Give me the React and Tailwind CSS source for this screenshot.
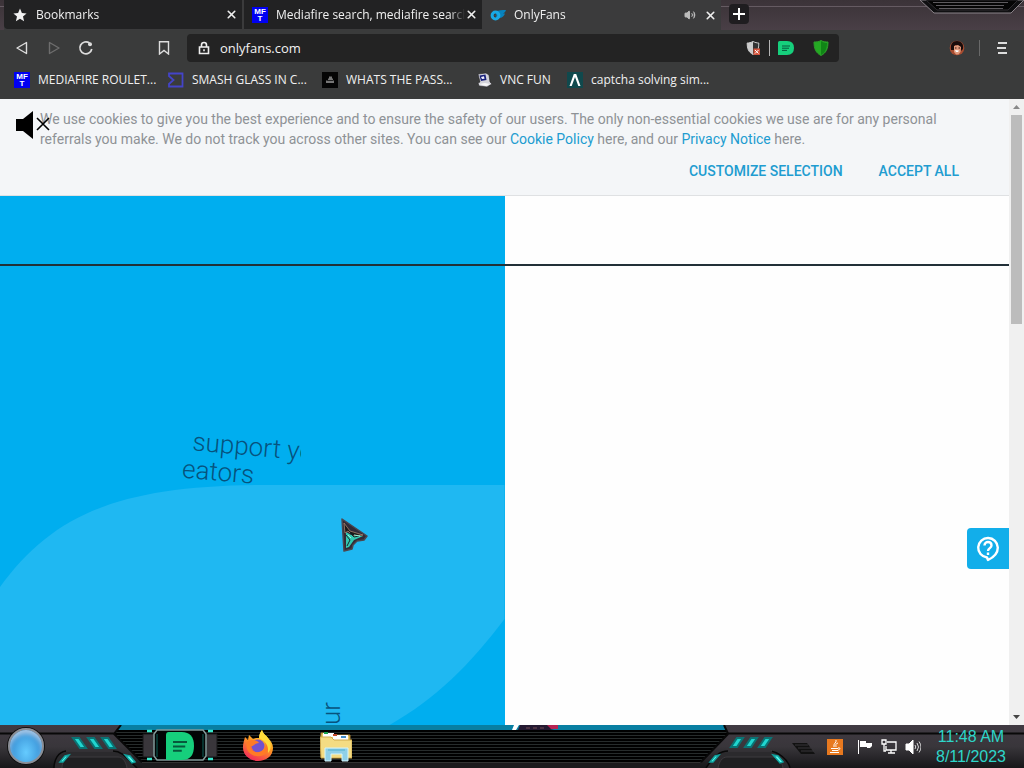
import React from "react";
import { X, Volume2 } from "lucide-react";

const stripes =
  "bg-[repeating-linear-gradient(180deg,#000_0px,#000_2px,#262b2b_2px,#262b2b_3px)]";

function MftIcon() {
  return (
    <span
      aria-hidden="true"
      className="flex h-4 w-4 shrink-0 flex-col items-center justify-center overflow-hidden bg-[#0000f2] font-['Liberation_Sans'] text-[8px] leading-[7px] font-bold text-white"
    >
      <span>MF</span>
      <span>T</span>
    </span>
  );
}

function StarIcon() {
  return (
    <svg viewBox="0 0 14 14" className="mx-px h-3.5 w-3.5 shrink-0" fill="#f2f2f2">
      <path d="M7 .6 8.9 5l4.7.4-3.6 3.1 1.1 4.7L7 10.7 2.9 13.2 4 8.500.4 5.400 5.1 5z" />
    </svg>
  );
}

function OnlyFansIcon() {
  return (
    <svg viewBox="0 0 16 16" className="h-4 w-4 shrink-0">
      <path d="M6 4.500C8.500 3 12 3 16 3c-.5 2-1.700 3-3 3.500 1 .1 1.500 0 2 0C14 9 12.500 10.500 10 11H6z" fill="#0782bd" />
      <circle cx="5.500" cy="8.500" r="3.400" fill="none" stroke="#18a9e6" strokeWidth="3" />
      <circle cx="5.500" cy="8.500" r="1.100" fill="#3b4c55" />
    </svg>
  );
}

function SigmaIcon() {
  return (
    <svg viewBox="0 0 16 16" className="h-4 w-4 shrink-0" fill="none" stroke="#4444c8" strokeWidth="1.800">
      <path d="M1 1.500h13.500v13H1V12l4.500-4L1 4z" />
    </svg>
  );
}

function CakeIcon() {
  return (
    <svg viewBox="0 0 16 16" className="h-4 w-4 shrink-0">
      <path d="M0 0h16v16H0z" fill="#050505" />
      <path d="M7 4.500h3v2h1v2h1V11H4V8.500h2v-2h1z" fill="#777" />
      <path d="M5 8.500h6" stroke="#222" />
    </svg>
  );
}

function VncIcon() {
  return (
    <svg viewBox="0 0 16 16" className="h-4 w-4 shrink-0">
      <path d="m2 2 8-1 3 2 1 7 2 2-5 3-8-1-1-3 2-1z" fill="#d3d3da" stroke="#222" strokeWidth=".6" />
      <path d="m3.500 3.500 6-1 1 5.500-5.500 1z" fill="#18207a" />
      <path d="m5 5 3-.8.5 2.500L6 7z" fill="#f4f4ff" />
      <path d="m3 12 6-1 5 1-4 2z" fill="#f7f7f7" />
    </svg>
  );
}

function CaptchaIcon() {
  return (
    <svg viewBox="0 0 16 16" className="h-4 w-4 shrink-0">
      <path d="M0 0h16v16H0z" fill="#10494d" />
      <path d="M2.500 14 6.800 2h2.400l4.300 12h-2.200L8 5 4.700 14z" fill="#fff" />
    </svg>
  );
}

function NoteIcon({ className }) {
  return (
    <svg viewBox="0 0 16 14" className={className} preserveAspectRatio="none">
      <path d="M0 1.500Q0 0 1.500 0H9q7 0 7 7t-7 7H0z" fill="#16cf7c" />
      <path d="M4 5h8M4 7.200h7M4 9.400h5" stroke="#07583c" strokeWidth="1" />
    </svg>
  );
}

function Tab({ icon, title, active, audio, className }) {
  return (
    <div
      className={`flex h-full min-w-0 items-center pl-2 pr-1 ${active ? "bg-[#3b3b3c]" : "bg-[#222223]"} ${className}`}
    >
      <button type="button" role="tab" aria-selected={!!active} className="flex min-w-0 flex-1 items-center gap-2 text-left">
        {icon}
        <span className="min-w-0 flex-1 overflow-hidden whitespace-nowrap [mask-image:linear-gradient(90deg,#000_92%,transparent)]">
          {title}
        </span>
      </button>
      {audio && (
        <button type="button" aria-label="Mute tab" className="mr-2 text-[#bbb]">
          <Volume2 size={12} fill="#bbb" />
        </button>
      )}
      <button type="button" aria-label={`Close ${title}`} className="text-[#eee]">
        <X size={13} strokeWidth={3} />
      </button>
    </div>
  );
}

function BrowserTabs() {
  return (
    <div className="relative flex h-[30px] items-start bg-linear-to-b from-[#3b3338] to-[#493f46] pl-1">
      <span className="absolute inset-x-0 top-1.5 h-px bg-[#655b62]" />
      <div role="tablist" className="relative flex h-full w-[717px] bg-[#3b3b3c]">
        <div className="flex w-[478px] gap-0.5 pb-px">
          <Tab className="flex-1 rounded-bl" icon={<StarIcon />} title="Bookmarks" />
          <Tab className="flex-1" icon={<MftIcon />} title="Mediafire search, mediafire search" />
        </div>
        <Tab className="flex-1" active audio icon={<OnlyFansIcon />} title="OnlyFans" />
      </div>
      <button
        type="button"
        aria-label="New tab"
        className="relative mt-1 ml-2 flex h-5 w-5 items-center justify-center rounded bg-[#1f1d20]"
      >
        <svg viewBox="0 0 12 12" className="h-3 w-3" stroke="#fff" strokeWidth="2">
          <path d="M6 0v12M0 6h12" />
        </svg>
      </button>
      <svg viewBox="0 0 106 15" className="absolute top-0 right-0 h-[15px] w-[106px]">
        <path d="M2 0h104l-13 13H16z" fill="#101012" stroke="#8a8389" />
        <path d="M8 0h92l-10 10H19z" fill="#050505" stroke="#2f2d30" />
        <path d="M15 2.500h75M18 5.500h68M21 8.500h64" stroke="#5d5a5e" />
      </svg>
    </div>
  );
}

function Toolbar() {
  return (
    <div className="flex h-9 items-center bg-[#3a3b3b]">
      <div className="flex w-[187px] shrink-0 items-center pl-4">
        <button type="button" aria-label="Back">
          <svg viewBox="0 0 12 14" className="h-3.5 w-3" fill="none" stroke="#ddd" strokeWidth="1.400" strokeLinejoin="round">
            <path d="M10.500 1.500v11L1 7z" />
          </svg>
        </button>
        <button type="button" aria-label="Forward" className="ml-5">
          <svg viewBox="0 0 12 14" className="h-3.5 w-3" fill="none" stroke="#6d6d6d" strokeWidth="1.400" strokeLinejoin="round">
            <path d="M1.500 1.500v11L11 7z" />
          </svg>
        </button>
        <button type="button" aria-label="Reload" className="ml-[18px]">
          <svg viewBox="0 0 16 16" className="h-4 w-4" fill="none" stroke="#ddd" strokeWidth="1.700">
            <path d="M11.500 3A6 6 0 1 0 13.800 9" />
            <circle cx="12" cy="4.300" r="2" fill="#ddd" stroke="none" />
          </svg>
        </button>
        <button type="button" aria-label="Bookmark page" className="ml-16">
          <svg viewBox="0 0 12 14" className="h-3.5 w-3" fill="none" stroke="#ddd" strokeWidth="1.400">
            <path d="M1.500.8h9V13L6 9.500 1.500 13z" />
          </svg>
        </button>
      </div>
      <div className="flex h-7 min-w-0 flex-1 items-center rounded bg-[#232323] pr-2.5">
        <svg viewBox="0 0 12 14" className="ml-[11px] h-3.5 w-3" fill="none" stroke="#eee" strokeWidth="1.600">
          <path d="M1.500 6h9v6.500h-9zM3.500 6V4a2.500 2.500 0 0 1 5 0v2M6 8.200v2" />
        </svg>
        <input
          aria-label="Address"
          defaultValue="onlyfans.com"
          className="ml-2.5 min-w-0 flex-1 bg-transparent text-[13px] leading-5 text-[#f2f2f2] outline-none"
        />
        <button type="button" aria-label="Blocked content">
          <svg viewBox="0 0 15 16" className="h-4 w-[15px]">
            <path d="M7 1.500c2 1 4 1.500 5.800 1.500 0 6-1 9-5.800 11.500C2.500 12 1.200 9 1.200 3 3 3 5 2.500 7 1.500z" fill="#333" stroke="#ccc" />
            <path d="M7 1.500v13C2.500 12 1.200 9 1.200 3 3 3 5 2.500 7 1.500z" fill="#ccc" />
            <path d="M7.500 8.500H14V15H7.500z" fill="#d4543c" />
            <path d="m9 10 3.500 3.500m0-3.500L9 13.500" stroke="#fff" />
          </svg>
        </button>
        <span className="mx-2 h-4 w-px bg-[#b5b5b5]" />
        <button type="button" aria-label="Notes">
          <NoteIcon className="h-3.5 w-4" />
        </button>
        <button type="button" aria-label="Protection" className="ml-[19px]">
          <svg viewBox="0 0 16 16" className="h-4 w-4">
            <path d="M8 .5c2 1.200 4.500 1.500 7 1.500 0 7-2 11-7 13.500C3 13 1 9 1 2 3.500 2 6 1.700 8 .5z" fill="#24a923" stroke="#2d9a2b" />
            <path d="M8 1v14c4-2.500 6-6 6-12-2 0-4-.6-6-2z" fill="#108516" />
          </svg>
        </button>
      </div>
      <div className="flex w-[185px] shrink-0 items-center justify-end pr-[17px]">
        <button type="button" aria-label="Profile">
          <svg viewBox="0 0 16 16" className="h-4 w-4">
            <circle cx="8" cy="8" r="7.300" fill="#a84c30" />
            <path d="M2 10C1 4 4 1 8 1s7 3 6 8l-2 2V7L6 5 5 10z" fill="#190c0b" />
            <path d="m5 6 4-1 3 2-.5 5-2 2.500H7L5 12z" fill="#e09a7c" />
            <path d="m6 10 4 .5-1 1.500H7z" fill="#fff" />
            <path d="M6 8h1.500M9.500 8H11" stroke="#3b1712" />
          </svg>
        </button>
        <span className="mr-[17px] ml-3.5 h-4 w-px bg-[#696969]" />
        <button type="button" aria-label="Menu">
          <svg viewBox="0 0 10 12" className="h-3 w-2.5" stroke="#ddd" strokeWidth="2">
            <path d="M1 1h9M0 6h9M1 11h9" />
          </svg>
        </button>
      </div>
    </div>
  );
}

const bookmarks = [
  { label: "MEDIAFIRE ROULET...", Icon: MftIcon, width: "w-[154px]" },
  { label: "SMASH GLASS IN C...", Icon: SigmaIcon, width: "w-[154px]" },
  { label: "WHATS THE PASS...", Icon: CakeIcon, width: "w-[154px]" },
  { label: "VNC FUN", Icon: VncIcon, width: "w-[91px]" },
  { label: "captcha solving sim...", Icon: CaptchaIcon, width: "w-[154px]" },
];

function BookmarkBar() {
  return (
    <nav aria-label="Bookmarks" className="flex h-[33px] items-center bg-[#3a3b3b] pb-1.5 pl-3.5">
      {bookmarks.map(({ label, Icon, width }) => (
        <a key={label} href="#" className={`flex shrink-0 items-center gap-2 whitespace-nowrap ${width}`}>
          <Icon />
          {label}
        </a>
      ))}
    </nav>
  );
}

function CookieNotice() {
  return (
    <section
      aria-label="Cookies"
      className="relative border-b border-[#dfe1e3] bg-[#f4f6f8] pt-2.5 pr-10 pb-2 pl-10 text-sm leading-5"
    >
      <p className="text-[#8e9296]">
        We use cookies to give you the best experience and to ensure the safety of our users. The only non-essential
        cookies we use are for any personal referrals you make. We do not track you across other sites. You can see our{" "}
        <a href="#" className="text-[#219cd0]">Cookie Policy</a> here, and our{" "}
        <a href="#" className="text-[#219cd0]">Privacy Notice</a> here.
      </p>
      <div className="flex justify-end gap-9 pt-3 pr-2.5 pb-1.5 font-medium text-[#219cd0]">
        <button type="button" className="uppercase">Customize selection</button>
        <button type="button" className="uppercase">Accept all</button>
      </div>
      <svg viewBox="0 0 36 28" className="absolute top-3 left-4 h-7 w-9">
        <path d="M0 8h7l10-8v28L7 20H0z" fill="#000" />
        <path d="m21 7 12 12M33 7 21 19" stroke="#000" strokeWidth="1.600" />
      </svg>
    </section>
  );
}

function Page() {
  return (
    <div className="flex min-h-0 flex-1 bg-white font-[Roboto,sans-serif]">
      <main className="relative flex min-w-0 flex-1 flex-col">
        <CookieNotice />
        <div className="relative flex flex-1">
          <div className="relative w-1/2 overflow-hidden bg-[#00aeef]">
            <svg viewBox="0 0 505 529" preserveAspectRatio="none" className="absolute inset-0 h-full w-full">
              <path d="M0 391C55 315 125 289 270 289H505V423C470 469 437 502 390 529H0z" fill="#1fb8f2" />
            </svg>
            <div className="absolute top-[225px] left-[170px] h-[70px] w-[131px] overflow-hidden text-[26px] leading-7 font-light whitespace-nowrap text-[#07527d]">
              <div className="absolute top-1.5 left-5 origin-top-left rotate-[5deg]">
                <div className="pl-1">support your</div>
                <div className="-ml-1">eators</div>
              </div>
            </div>
            <div className="absolute bottom-0 left-[317px] text-[26px] leading-7 font-light text-[#07527d] [writing-mode:sideways-lr]">
              ur
            </div>
          </div>
          <div className="w-1/2 bg-[#fefefe]" />
          <div className="absolute inset-x-0 top-[68px] h-0.5 bg-[#223038]" />
          <svg viewBox="0 0 28 34" className="absolute top-[322px] left-[340px] h-[34px] w-7">
            <path d="M2 1 27 18l-3 4-7 1-4 4-1 4-8 2z" fill="#302b38" stroke="#4c464e" strokeWidth="1.500" strokeLinejoin="round" />
            <path d="m6 14 5 3 12 1-9 4-5 7-3 1z" fill="#31c9b2" />
            <path d="m4 5 6 8 13 4-10 1-5-5-3 2z" fill="#181819" stroke="#a9836d" strokeWidth=".8" />
            <path d="m6 17 4 5-3 6M10 15l4 4 5-1" fill="none" stroke="#17252a" />
            <path d="m8 17 3 3M14 17l6 1" fill="none" stroke="#9af5d8" />
          </svg>
        </div>
        <button
          type="button"
          aria-label="Help"
          className="absolute right-0 bottom-[156px] flex h-[41px] w-[42px] items-center justify-center rounded-l-sm bg-[#12aeea]"
        >
          <svg viewBox="0 0 24 28" className="h-7 w-6" fill="none" stroke="#fff" strokeWidth="2.400">
            <path d="M11 22.500A9.800 9.800 0 1 1 21.800 12.500c0 6-4 9.800-9.800 12.500z" strokeLinejoin="round" />
            <path d="M8.500 10.500c0-4.600 7-4.600 7 0 0 2.600-3.500 2.600-3.500 5.500" />
            <path d="M12 17.500V20" />
          </svg>
        </button>
      </main>
      <div aria-hidden="true" className="flex w-[15px] shrink-0 flex-col items-center justify-between bg-[#f0f0f0] pb-1">
        <div className="flex w-full flex-1 flex-col items-center">
          <svg viewBox="0 0 7 4" className="my-1.5 h-1 w-[7px] shrink-0" fill="#888">
            <path d="M0 4 3.500 0 7 4z" />
          </svg>
          <span className="h-[209px] w-[11px] bg-[#bcbcbc]" />
        </div>
        <svg viewBox="0 0 7 4" className="mb-0.5 h-1 w-[7px]" fill="#444">
          <path d="M0 0h7L3.500 4z" />
        </svg>
      </div>
    </div>
  );
}

function PanelDefs({ id }) {
  return (
    <defs>
      <linearGradient id={id} x2="0" y2="1">
        <stop stopColor="#403a42" />
        <stop offset=".5" stopColor="#39363b" />
        <stop offset="1" stopColor="#171719" />
      </linearGradient>
    </defs>
  );
}

function LeftPanel() {
  return (
    <svg viewBox="0 0 142 43" className="absolute top-0 left-0 h-[43px] w-[142px]">
      <PanelDefs id="leftPanel" />
      <path d="M0 0h121l-7 9 28 28v6H0z" fill="url(#leftPanel)" />
      <path d="M0 8.500h114M121 0l-7 9 28 28" fill="none" stroke="#080808" strokeWidth="2" />
      <path d="M54 43c0-8 4-16 12-17h47c8 0 12 5 24 17" fill="#2b2a2d" stroke="#080808" strokeWidth="1.500" />
      <path d="M66 26h47" stroke="#57535a" />
      <path d="M62 43c0-6 3-11 8-11h48c5 0 8 5 9 11" fill="#202022" stroke="#3c3a3e" />
      <path d="M73 13h6l7 10h-6zM88 13h6l7 10h-6zM102 13h6l7 10h-6z" fill="#20d5cf" stroke="#0a7374" strokeWidth="2" />
      <path d="m60 37 5-6 4-1-6 7zM125 30l5 1 5 6-3 1z" fill="#5ffff0" stroke="#10a3a0" strokeWidth="1.500" />
    </svg>
  );
}

function RightPanel() {
  return (
    <svg viewBox="0 0 324 43" preserveAspectRatio="none" className="absolute top-0 right-0 h-[43px] w-[324px]">
      <PanelDefs id="rightPanel" />
      <path d="M24 0h300v43H0v-6l28-28z" fill="url(#rightPanel)" />
      <path d="M324 8.500H28L24 0M28 9 1 37" fill="none" stroke="#080808" strokeWidth="2" />
      <path d="M6 43c8-12 14-17 22-17h42c8 1 18 8 20 17" fill="#2b2a2d" stroke="#080808" strokeWidth="1.500" />
      <path d="M28 26h44" stroke="#57535a" />
      <path d="M18 43c1-6 4-11 9-11h47c5 0 8 5 9 11" fill="#202022" stroke="#3c3a3e" />
      <path d="M37 13h6l-6 9h-6zM51 13h6l-6 9h-6zM65 13h6l-6 9h-6z" fill="#20d5cf" stroke="#0a7374" strokeWidth="2" />
      <path d="m10 37 5-6 4-1-6 7zM73 30l5 1 5 6-3 1z" fill="#5ffff0" stroke="#10a3a0" strokeWidth="1.500" />
      <path d="M92 18h15l8 11h-14z" fill="#111" />
      <path d="M95 20h13M98 23h13M101 26h13" stroke="#39363b" />
    </svg>
  );
}

function Taskbar() {
  return (
    <footer className="relative flex h-[43px] shrink-0 overflow-hidden bg-black">
      <div className="absolute inset-0 flex flex-col">
        <div className="h-[5px] bg-[#087fa2]" />
        <div className={`flex-1 ${stripes}`} />
        <div className="h-1.5 border-t border-[#333] bg-[#1c1b1d]" />
      </div>
      <svg viewBox="0 0 48 5" className="absolute top-0 left-1/2 h-[5px] w-12">
        <path d="M2 0h5L4 5H0z" fill="#fff" />
        <path d="M8 0h38v3L38 5H6z" fill="#251a32" />
        <path d="M35 0h11v4h-7z" fill="#b72453" />
        <path d="M14 3h18" stroke="#744a55" strokeDasharray="4 3" />
      </svg>
      <LeftPanel />
      <RightPanel />
      <div className="relative flex w-[142px] shrink-0 items-center pb-0.5 pl-2">
        <button
          type="button"
          aria-label="Start"
          className="h-9 w-9 rounded-full border-2 border-[#8b8f97] bg-radial-[at_50%_70%] from-[#65cbff] to-[#287bc5] shadow-[0_0_0_1px_#111,inset_0_4px_4px_#a4c4e4]"
        />
      </div>
      <div className="relative flex min-w-0 flex-1 items-center pb-0.5">
        <button type="button" aria-label="Notes" className="relative h-9 w-[76px] shrink-0">
          <svg viewBox="0 0 76 36" className="absolute inset-0 h-9 w-[76px]">
            <path d="M1 6h11v23H1zM64 6h11v23H64z" fill="#39363b" stroke="#171719" />
            <path d="M15 2h46l3 4v22l-3 4H15l-3-4V6z" fill="#020505" stroke="#839b9b" strokeWidth="1.500" />
            <path d="M15 6v23M61 6v23" stroke="#0d6159" />
            <path d="M5 3h5M66 3h5M5 31h5M66 31h5" stroke="#37e7cc" strokeWidth="2.500" />
          </svg>
          <NoteIcon className="absolute top-1 left-6 h-7 w-7" />
        </button>
        <button type="button" aria-label="Firefox" className="ml-6 h-8 w-8 shrink-0">
          <svg viewBox="0 0 32 32" className="h-8 w-8">
            <defs>
              <linearGradient id="flame" x1=".8" y1="0" x2=".3" y2="1">
                <stop stopColor="#fff04b" />
                <stop offset=".45" stopColor="#ff9a20" />
                <stop offset="1" stopColor="#f1275b" />
              </linearGradient>
            </defs>
            <path d="M3 7 6 10l1-5 4 4c2-1 4-1 6-1 0-3 1-5 3-8 1 4 4 5 6 8 3 3 5 6 5 10 0 8-7 13-15 13S1 25 1 18c0-5 1-7 2-11z" fill="url(#flame)" />
            <circle cx="16" cy="16" r="6.500" fill="#7353cf" />
            <path d="M6 11c4-2 9-1 11 2-5 0-5 4-9 3 1 7 10 8 14 3 3-4 1-8-2-10 6 1 8 8 5 13-5 7-17 5-20-3-1-3-1-6 1-8z" fill="#ff7b26" />
            <path d="M17 8c0-3 1-5 3-8 1 4 4 5 6 8 4 6 3 12 0 15 1-8-3-12-9-15z" fill="#ffdc3b" />
          </svg>
        </button>
        <button type="button" aria-label="File Explorer" className="ml-[46px] h-8 w-8 shrink-0">
          <svg viewBox="0 0 32 32" className="h-8 w-8">
            <path d="M1 3h7l2 2h20v8H1z" fill="#e8c864" stroke="#a78031" />
            <path d="M3 3h11v4H3zM13 5h15v5H13z" fill="#fff" />
            <path d="M4 3h4" stroke="#1aa34e" strokeWidth="2" />
            <path d="M13 5h4" stroke="#c44a2c" strokeWidth="2" />
            <path d="M21 7h5" stroke="#438dc8" strokeWidth="2" />
            <path d="M0 7h11l3 3h18v18H1z" fill="#f4dc83" stroke="#d0aa4c" />
            <path d="M5 31V18h23v13h-6v-7H11v7z" fill="#8fd0e7" stroke="#d5f5fb" />
            <path d="M8 20h17" stroke="#4eafd0" />
          </svg>
        </button>
      </div>
      <div className="relative flex shrink-0 items-center">
        <button type="button" aria-label="Java" className="mr-3.5">
          <svg viewBox="0 0 16 16" className="h-4 w-4" fill="none" stroke="#fff">
            <path d="M0 0h16v16H0z" fill="#e8791f" stroke="none" />
            <path d="M9 1C10 4 6 4 7 8M11 4c-3 1-2 2-2 4M4 9.500h7M5 11.500h6M3 13.500h9M11 9c3-1 2 2 0 2" />
          </svg>
        </button>
        <button type="button" aria-label="Action center" className="mr-2">
          <svg viewBox="0 0 16 16" className="h-4 w-4" fill="#fff">
            <path d="M1 1h1v14H1zM3 2h6v6H3zM9 4h6v3l-2 2H10V8H9z" />
          </svg>
        </button>
        <button type="button" aria-label="Network" className="mr-2">
          <svg viewBox="0 0 16 16" className="h-4 w-4" fill="none" stroke="#fff" strokeWidth="1.300">
            <path d="M6 3h9v8H5V7M10 11v3M7 14h7M1 1h4v4H1zM3 5v7h2" />
          </svg>
        </button>
        <button type="button" aria-label="Volume" className="mr-[15px]">
          <svg viewBox="0 0 16 16" className="h-4 w-4" fill="none" stroke="#fff">
            <path d="M1 5h3l4-4v14l-4-4H1z" fill="#fff" />
            <path d="M10 6q1.500 2 0 4M12 4q3 4 0 8M14 2.500q4 5.500 0 11" strokeWidth=".8" />
          </svg>
        </button>
        <div className="mr-[18px] text-center font-['Liberation_Sans',Arial,sans-serif] text-base leading-5 text-[#2ed6c9]">
          <div>11:48 AM</div>
          <div>8/11/2023</div>
        </div>
      </div>
    </footer>
  );
}

export default function App() {
  return (
    <div className="flex min-h-screen flex-col overflow-hidden bg-[#3a3b3b] font-['Open_Sans','Noto_Sans',sans-serif] text-xs text-[#f0f0f0]">
      <header>
        <BrowserTabs />
        <Toolbar />
        <BookmarkBar />
      </header>
      <Page />
      <Taskbar />
    </div>
  );
}
